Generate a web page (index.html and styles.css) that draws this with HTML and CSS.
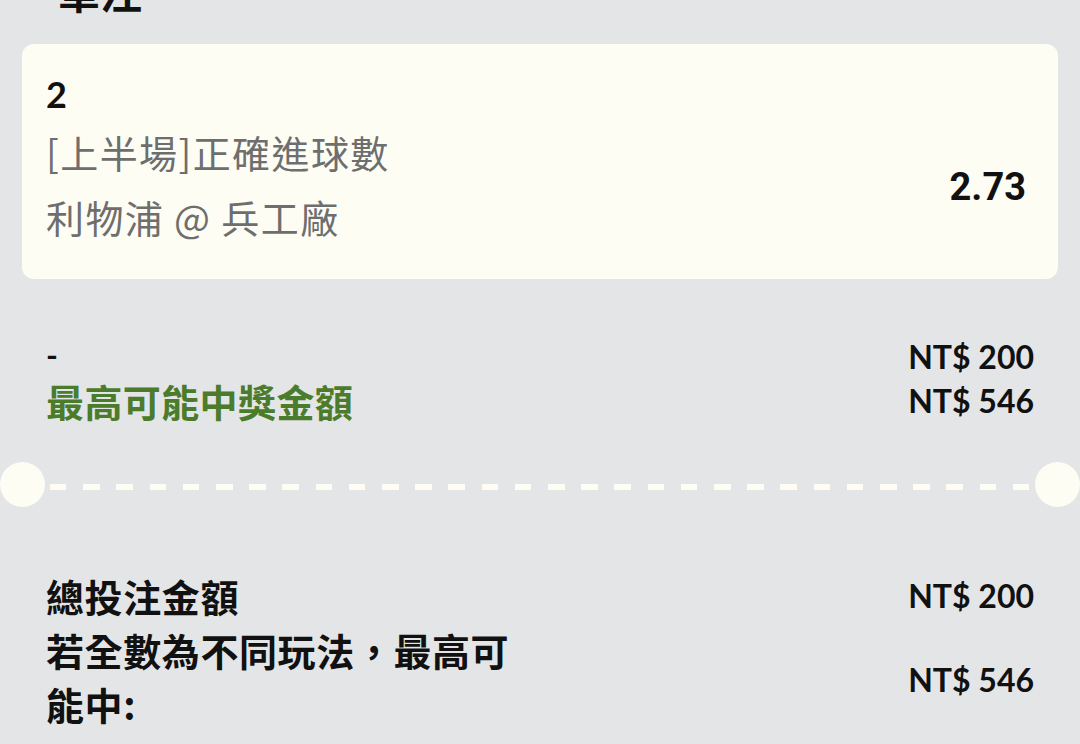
FILE: index.html
```html
<!DOCTYPE html>
<html>
<head>
	<title>單注</title>
	<meta charset="utf-8">
	<link rel="stylesheet" href="styles.css">
</head>
<body>
	<div class="sheet">
		<div class="title">單注</div>

		<div class="bet-card">
			<div class="bet-pick">2</div>
			<div class="bet-row">
				<div class="bet-info">
					<div class="bet-market">[上半場]正確進球數</div>
					<div class="bet-match">利物浦 @ 兵工廠</div>
				</div>
				<div class="bet-odds">2.73</div>
			</div>
		</div>

		<div class="stake">
			<div class="row">
				<span class="stake-input">-</span>
				<span class="amount">NT$ 200</span>
			</div>
			<div class="row">
				<span class="win-label">最高可能中獎金額</span>
				<span class="amount">NT$ 546</span>
			</div>
		</div>

		<div class="ticket-cut">
			<span class="notch"></span>
			<span class="dashes"></span>
			<span class="notch"></span>
		</div>

		<div class="summary">
			<div class="row">
				<span class="sum-label">總投注金額</span>
				<span class="amount">NT$ 200</span>
			</div>
			<div class="row">
				<span class="sum-label">若全數為不同玩法，最高可能中:</span>
				<span class="amount amount-low">NT$ 546</span>
			</div>
		</div>
	</div>
</body>
</html>
```

FILE: styles.css
```css
body {
	margin: 0;
	padding: 0;
	background-color: #e4e5e7;
	font-family: "Noto Sans CJK TC", "Noto Sans", sans-serif;
	color: #111;
	overflow: hidden;
}

.sheet {
	padding: 0 22px;
}

.title {
	margin-top: -34px;
	padding-left: 36px;
	font-size: 42px;
	line-height: 50px;
	font-weight: 700;
	color: #111;
}

.bet-card {
	margin-top: 28px;
	height: 235px;
	box-sizing: border-box;
	padding: 22px 32px 0 24px;
	background-color: #fdfdf4;
	border-radius: 12px;
}

.bet-pick {
	font-family: Lato, sans-serif;
	font-weight: 700;
	font-size: 36px;
	line-height: 56px;
}

.bet-row {
	display: flex;
	align-items: center;
	justify-content: space-between;
}

.bet-market,
.bet-match {
	font-size: 38px;
	letter-spacing: 1.4px;
	color: #6e6e6e;
}

.bet-market {
	line-height: 60px;
}

.bet-match {
	line-height: 70px;
}

.bet-odds {
	font-family: Roboto, sans-serif;
	font-weight: 700;
	font-size: 38px;
}

.stake {
	padding: 56px 24px 0;
}

.row {
	display: flex;
	align-items: center;
	justify-content: space-between;
}

.amount {
	font-family: Lato, sans-serif;
	font-weight: 700;
	font-size: 32px;
	line-height: 44px;
	color: #111;
}

.amount-low {
	padding-top: 6px;
}

.stake-input {
	font-family: Lato, sans-serif;
	font-weight: 700;
	font-size: 32px;
	line-height: 40px;
	padding-bottom: 4px;
}

.win-label {
	font-size: 38px;
	font-weight: 700;
	letter-spacing: 0.4px;
	line-height: 44px;
	color: #4b7c2b;
}

.ticket-cut {
	display: flex;
	align-items: center;
	margin: 39px -22px 0;
}

.notch {
	width: 45px;
	height: 45px;
	flex: none;
	border-radius: 50%;
	background-color: #fdfdf4;
}

.dashes {
	flex: 1;
	height: 6px;
	margin: 4px 5px 0;
	background: repeating-linear-gradient(to right, #fdfdf4 0, #fdfdf4 16.5px, transparent 16.5px, transparent 33.2px);
}

.summary {
	padding: 62px 24px 0;
}

.sum-label {
	width: 480px;
	font-size: 38px;
	font-weight: 700;
	letter-spacing: 0.6px;
	line-height: 54px;
}
```
